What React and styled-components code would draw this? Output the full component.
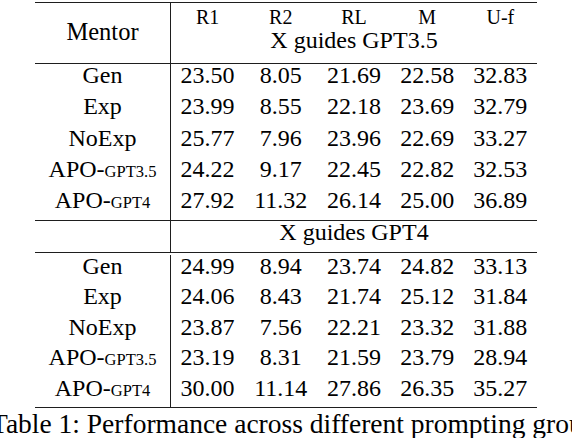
import React from "react";
import styled, { createGlobalStyle } from "styled-components";

const GlobalStyle = createGlobalStyle`
  html, body {
    margin: 0;
    padding: 0;
    background: #fff;
    overflow: hidden;
  }
  body {
    width: 572px;
    height: 438px;
    font-family: "Liberation Serif", "Times New Roman", serif;
    color: #000;
  }
`;

const RULE = "1px solid #1e1e1e";
const COLS = "136px repeat(5, 73.2px)";

const groups = [
  {
    title: "X guides GPT3.5",
    rows: [
      ["Gen", null, ["23.50", "8.05", "21.69", "22.58", "32.83"]],
      ["Exp", null, ["23.99", "8.55", "22.18", "23.69", "32.79"]],
      ["NoExp", null, ["25.77", "7.96", "23.96", "22.69", "33.27"]],
      ["APO-", "GPT3.5", ["24.22", "9.17", "22.45", "22.82", "32.53"]],
      ["APO-", "GPT4", ["27.92", "11.32", "26.14", "25.00", "36.89"]],
    ],
  },
  {
    title: "X guides GPT4",
    rows: [
      ["Gen", null, ["24.99", "8.94", "23.74", "24.82", "33.13"]],
      ["Exp", null, ["24.06", "8.43", "21.74", "25.12", "31.84"]],
      ["NoExp", null, ["23.87", "7.56", "22.21", "23.32", "31.88"]],
      ["APO-", "GPT3.5", ["23.19", "8.31", "21.59", "23.79", "28.94"]],
      ["APO-", "GPT4", ["30.00", "11.14", "27.86", "26.35", "35.27"]],
    ],
  },
];

const DataRows = ({ rows, pad }) =>
  rows.map(([name, sub, vals], i) => (
    <Row key={i} $pad={pad}>
      <NameCell>
        {name}
        {sub && <Small>{sub}</Small>}
      </NameCell>
      {vals.map((v, j) => (
        <ValueCell key={j}>{v}</ValueCell>
      ))}
    </Row>
  ));

const Table = () => {
  return (
    <>
      <GlobalStyle />
      <TableWrap>
        <Header>
          <MentorCell>Mentor</MentorCell>
          {["R1", "R2", "RL", "M", "U-f"].map((l) => (
            <LabelCell key={l}>{l}</LabelCell>
          ))}
          <GroupTitle>{groups[0].title}</GroupTitle>
        </Header>

        <Block $top={0} $last>
          <DataRows rows={groups[0].rows} pad={8.25} />
        </Block>

        <GroupRow>
          <EmptyCell />
          <GroupTitle>{groups[1].title}</GroupTitle>
        </GroupRow>

        <Block $top={1.5}>
          <DataRows rows={groups[1].rows} pad={7.5} />
        </Block>
      </TableWrap>
      <Caption>Table 1: Performance across different prompting groups.</Caption>
    </>
  );
};

export default Table;

const TableWrap = styled.div`
  margin: 2px 0 0 35px;
  width: 502px;
  border-top: ${RULE};
  border-bottom: ${RULE};
`;

const Header = styled.div`
  display: grid;
  grid-template-columns: ${COLS};
  grid-template-rows: auto auto;
  border-bottom: ${RULE};
`;

const MentorCell = styled.div`
  grid-row: 1 / span 2;
  display: flex;
  align-items: center;
  justify-content: center;
  padding-bottom: 2px;
  border-right: ${RULE};
  font-size: 24.5px;
`;

const LabelCell = styled.div`
  padding-top: 4px;
  text-align: center;
  font-size: 20px;
  line-height: 20px;
`;

const GroupTitle = styled.div`
  grid-column: 2 / span 5;
  text-align: center;
  font-size: 24px;
  line-height: 27px;
  padding-bottom: 9px;
`;

const GroupRow = styled.div`
  display: grid;
  grid-template-columns: ${COLS};
  border-bottom: ${RULE};

  ${GroupTitle} {
    line-height: 23px;
    padding-bottom: 8px;
  }
`;

const EmptyCell = styled.div`
  border-right: ${RULE};
`;

const Block = styled.div`
  padding-top: ${(p) => p.$top}px;
  border-bottom: ${(p) => (p.$last ? RULE : "none")};
`;

const Row = styled.div`
  display: grid;
  grid-template-columns: ${COLS};
  font-size: 24px;
  line-height: 23px;

  & > div {
    padding-bottom: ${(p) => p.$pad}px;
  }
`;

const NameCell = styled.div`
  border-right: ${RULE};
  text-align: center;
  white-space: nowrap;
`;

const ValueCell = styled.div`
  text-align: center;
`;

const Small = styled.span`
  font-size: 16.5px;
  line-height: 1;
`;

const Caption = styled.div`
  margin: 2px 0 0 -9px;
  white-space: nowrap;
  font-size: 27.5px;
  line-height: 28px;
`;
